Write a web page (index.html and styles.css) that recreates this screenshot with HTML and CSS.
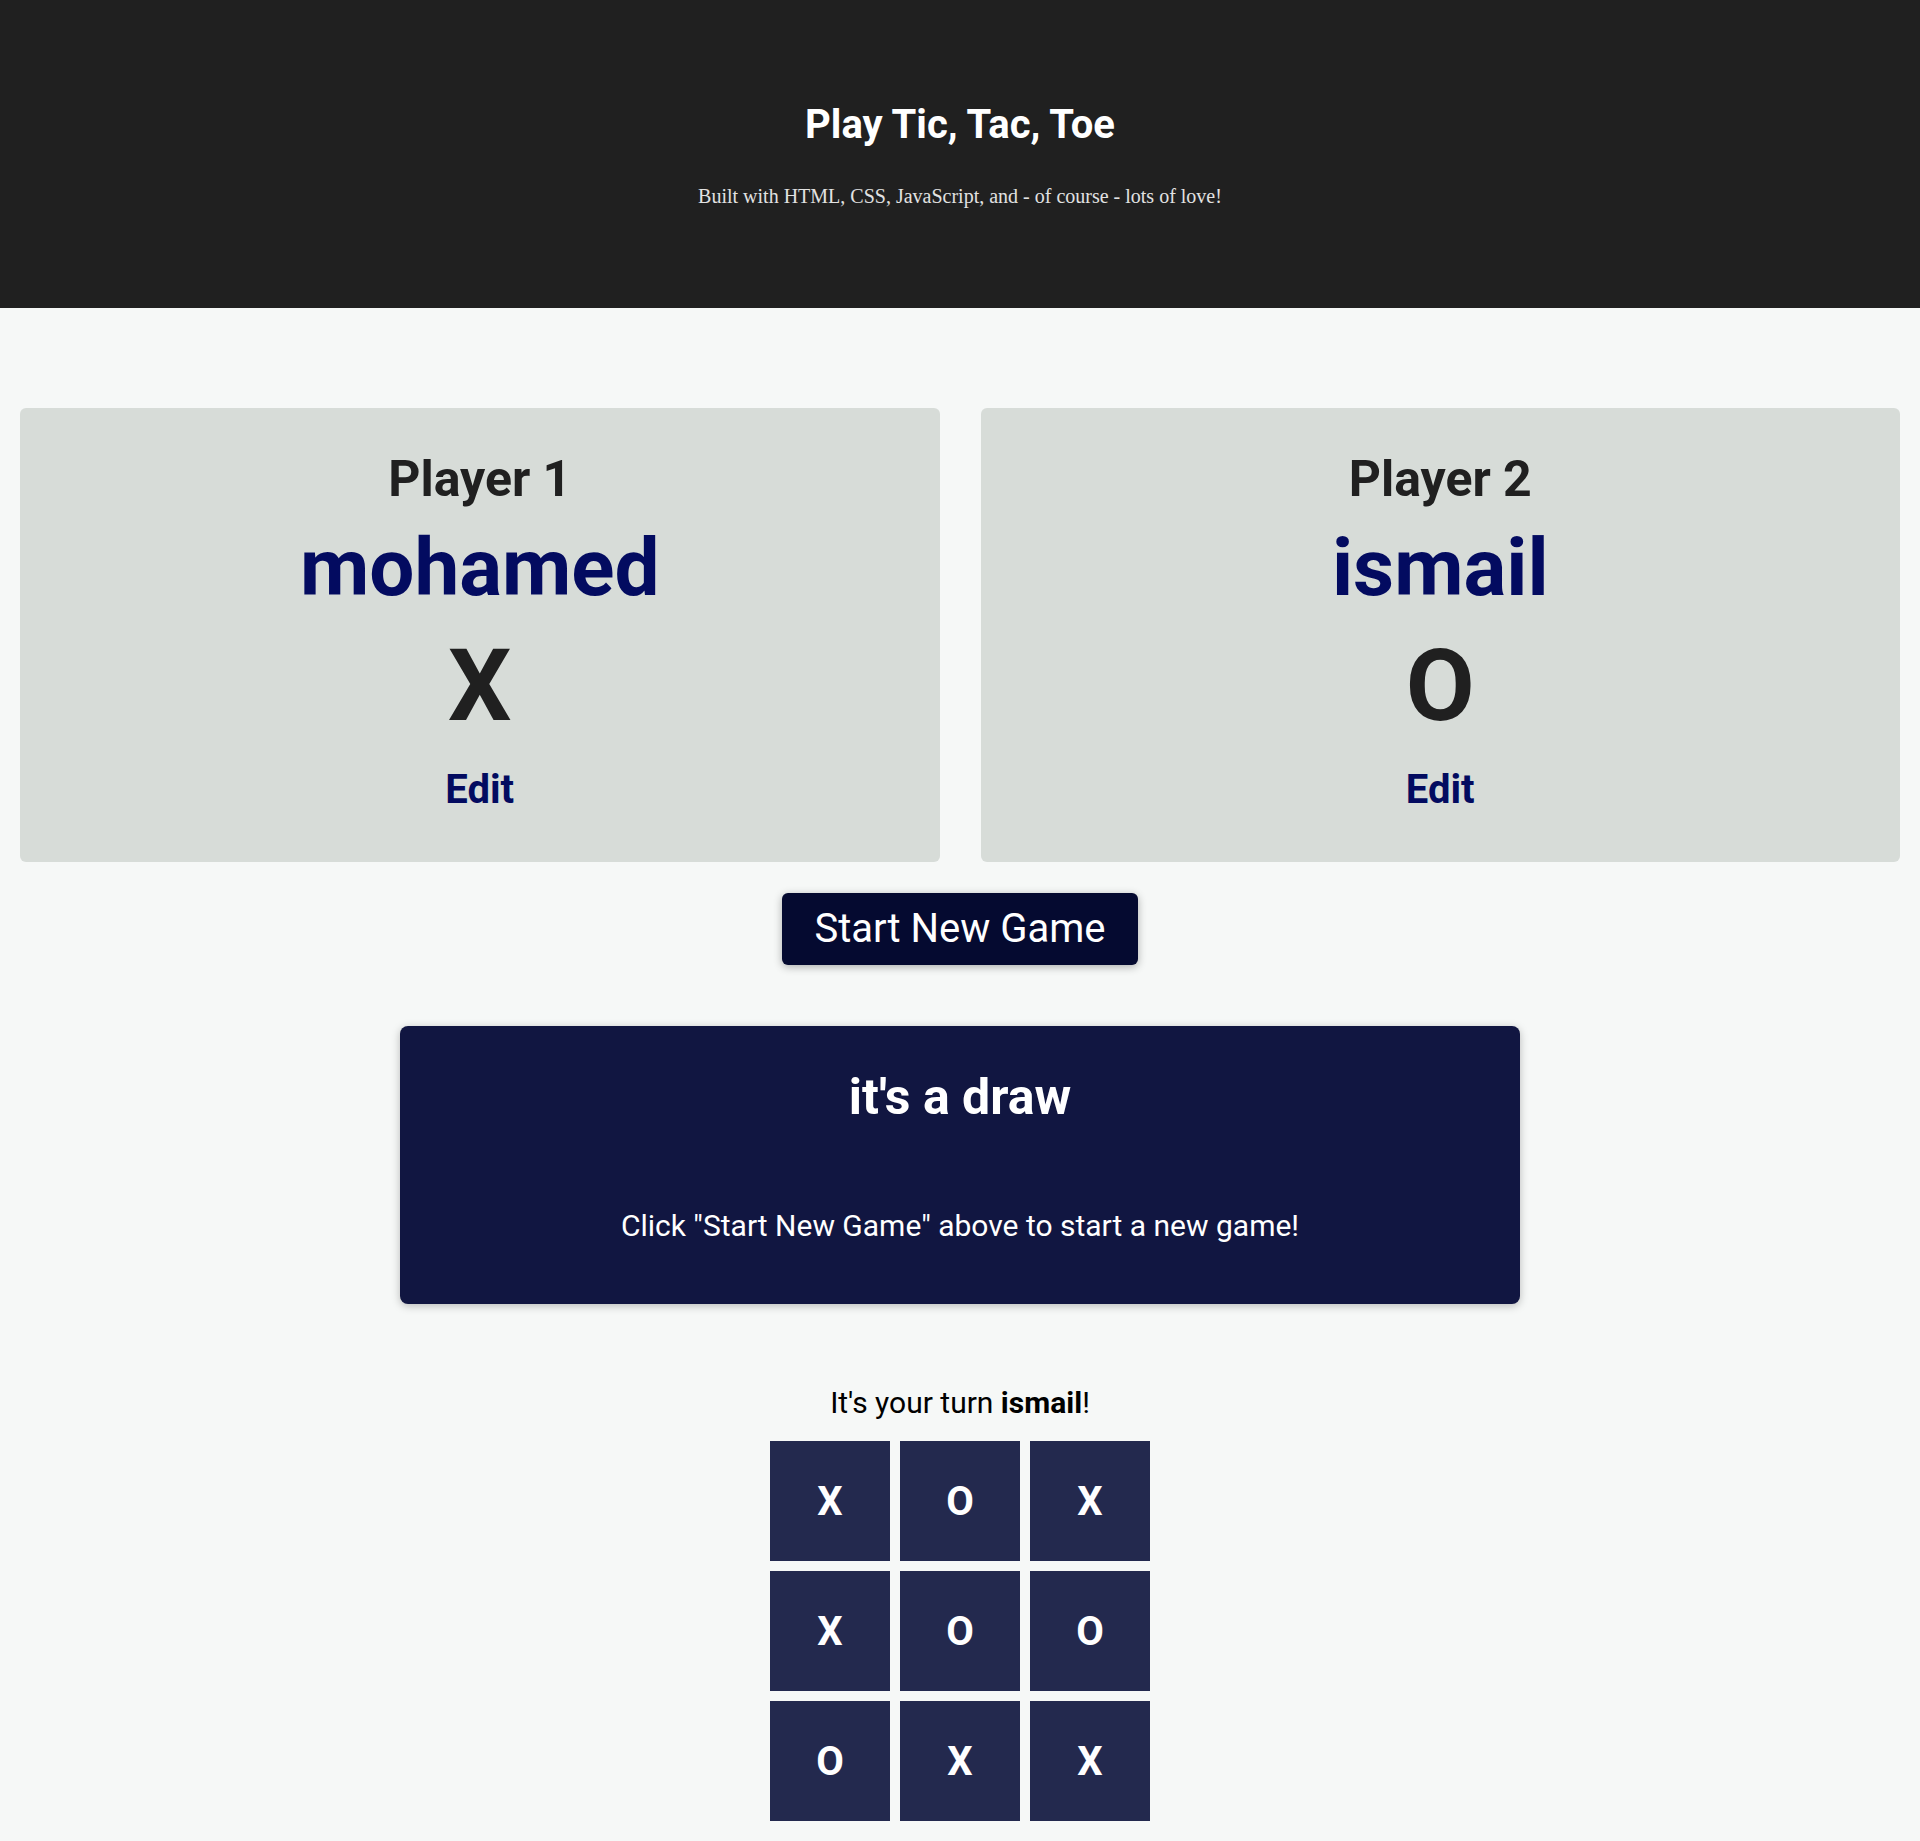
FILE: index.html
```html
<!DOCTYPE html>
<html lang="en">
<head>
<meta charset="utf-8">
<title>Tic Tac Toe</title>
<link rel="stylesheet" href="styles.css">
</head>
<body>
<header class="site-header">
  <h1 class="site-title">Play Tic, Tac, Toe</h1>
  <p class="site-sub">Built with HTML, CSS, JavaScript, and - of course - lots of love!</p>
</header>
<main class="main">
  <section class="players">
    <article class="player-card">
      <h2 class="player-label">Player 1</h2>
      <h3 class="player-name">mohamed</h3>
      <p class="player-symbol">X</p>
      <button class="edit-btn">Edit</button>
    </article>
    <article class="player-card">
      <h2 class="player-label">Player 2</h2>
      <h3 class="player-name">ismail</h3>
      <p class="player-symbol">O</p>
      <button class="edit-btn">Edit</button>
    </article>
  </section>
  <div class="start-row">
    <button class="start-btn">Start New Game</button>
  </div>
  <section class="result">
    <h2 class="result-title">it's a draw</h2>
    <p class="result-text">Click "Start New Game" above to start a new game!</p>
  </section>
  <p class="turn">It's your turn <strong>ismail</strong>!</p>
  <ol class="board">
    <li class="cell">X</li>
    <li class="cell">O</li>
    <li class="cell">X</li>
    <li class="cell">X</li>
    <li class="cell">O</li>
    <li class="cell">O</li>
    <li class="cell">O</li>
    <li class="cell">X</li>
    <li class="cell">X</li>
  </ol>
</main>
</body>
</html>
```
FILE: styles.css
```css
* { box-sizing: border-box; }
body {
  margin: 0;
  background: #f6f8f7;
  font-family: Roboto, "Liberation Sans", sans-serif;
  color: #202020;
}
.site-header {
  background: #202020;
  height: 308px;
  padding-top: 105px;
  text-align: center;
}
.site-title {
  margin: 0;
  font-size: 40px;
  line-height: 1;
  font-weight: 700;
  color: #ffffff;
}
.site-sub {
  margin: 41px 0 0;
  font-family: "Liberation Serif", serif;
  font-size: 20px;
  line-height: 1;
  color: #e2e2e2;
}
.main {
  padding: 100px 20px 20px;
}
.players {
  display: grid;
  grid-template-columns: 1fr 1fr;
  gap: 41px;
}
.player-card {
  background: #d7dcd8;
  border-radius: 6px;
  padding: 46px 0 52px;
  display: flex;
  flex-direction: column;
  align-items: center;
  text-align: center;
}
.player-label {
  margin: 0;
  font-size: 50px;
  line-height: 1;
  font-weight: 700;
  color: #202020;
}
.player-name {
  margin: 24px 0 0;
  font-size: 80px;
  line-height: 1;
  font-weight: 700;
  color: #030b60;
}
.player-symbol {
  margin: 28px 0 0;
  font-size: 100px;
  line-height: 1;
  font-weight: 700;
  color: #202020;
}
.edit-btn {
  margin-top: 34px;
  padding: 0;
  border: 0;
  background: none;
  font-family: inherit;
  font-size: 40px;
  line-height: 1;
  font-weight: 700;
  color: #030b60;
  cursor: pointer;
}
.start-row {
  display: flex;
  justify-content: center;
  margin-top: 31px;
}
.start-btn {
  background: #050a30;
  color: #ffffff;
  border: 0;
  border-radius: 6px;
  padding: 16px 32px;
  font-family: inherit;
  font-size: 40px;
  line-height: 1;
  font-weight: 400;
  box-shadow: 0 2px 8px rgba(0, 0, 0, 0.3);
  cursor: pointer;
}
.result {
  width: 1120px;
  margin: 61px auto 0;
  background: #111641;
  color: #ffffff;
  border-radius: 8px;
  padding: 46px 20px 63px;
  text-align: center;
  box-shadow: 0 2px 8px rgba(0, 0, 0, 0.25);
}
.result-title {
  margin: 0;
  font-size: 50px;
  line-height: 1;
  font-weight: 700;
}
.result-text {
  margin: 89px 0 0;
  font-size: 30px;
  line-height: 1;
}
.turn {
  margin: 84px 0 0;
  text-align: center;
  font-size: 30px;
  line-height: 1;
  color: #000000;
}
.turn strong { font-weight: 700; }
.board {
  list-style: none;
  margin: 23px auto 0;
  padding: 0;
  display: grid;
  grid-template-columns: repeat(3, 120px);
  grid-auto-rows: 120px;
  gap: 10px;
  justify-content: center;
}
.cell {
  background: #23294e;
  color: #ffffff;
  display: flex;
  align-items: center;
  justify-content: center;
  font-size: 40px;
  font-weight: 700;
}
```
